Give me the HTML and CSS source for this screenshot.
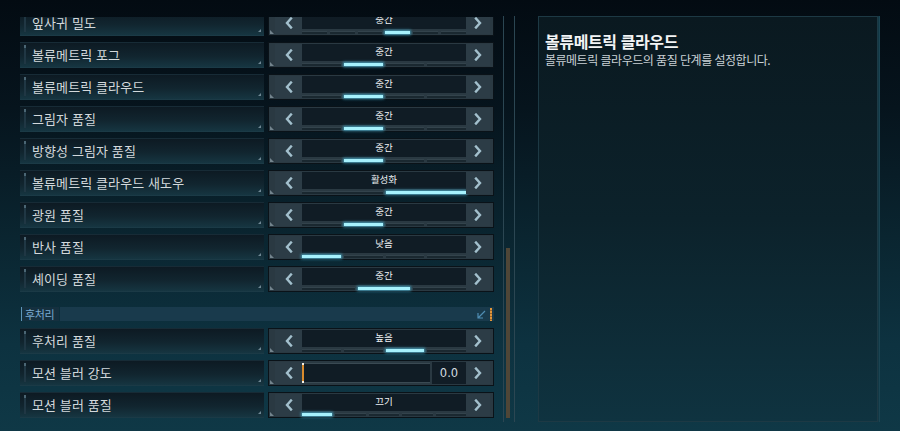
FILE: index.html
```html
<!DOCTYPE html>
<html lang="ko">
<head>
<meta charset="utf-8">
<link rel="stylesheet" href="styles.css">
</head>
<body>
<div class="screen">
  <div class="list-wrap">
    <div class="list">
      <div class="row">
        <div class="label">잎사귀 밀도</div>
        <div class="control">
          <div class="arrow"><svg viewBox="0 0 8 12" width="8" height="12"><polyline points="6,1.5 2,6 6,10.5"/></svg></div>
          <div class="center">
            <div class="display">중간</div>
            <div class="segs"><i></i><i></i><i></i><i class="on"></i><i></i><i></i></div>
          </div>
          <div class="arrow right"><svg viewBox="0 0 8 12" width="8" height="12"><polyline points="2,1.5 6,6 2,10.5"/></svg></div>
        </div>
      </div>
      <div class="row">
        <div class="label">볼류메트릭 포그</div>
        <div class="control">
          <div class="arrow"><svg viewBox="0 0 8 12" width="8" height="12"><polyline points="6,1.5 2,6 6,10.5"/></svg></div>
          <div class="center">
            <div class="display">중간</div>
            <div class="segs"><i></i><i class="on"></i><i></i><i></i></div>
          </div>
          <div class="arrow right"><svg viewBox="0 0 8 12" width="8" height="12"><polyline points="2,1.5 6,6 2,10.5"/></svg></div>
        </div>
      </div>
      <div class="row">
        <div class="label">볼류메트릭 클라우드</div>
        <div class="control">
          <div class="arrow"><svg viewBox="0 0 8 12" width="8" height="12"><polyline points="6,1.5 2,6 6,10.5"/></svg></div>
          <div class="center">
            <div class="display">중간</div>
            <div class="segs"><i></i><i class="on"></i><i></i><i></i></div>
          </div>
          <div class="arrow right"><svg viewBox="0 0 8 12" width="8" height="12"><polyline points="2,1.5 6,6 2,10.5"/></svg></div>
        </div>
      </div>
      <div class="row">
        <div class="label">그림자 품질</div>
        <div class="control">
          <div class="arrow"><svg viewBox="0 0 8 12" width="8" height="12"><polyline points="6,1.5 2,6 6,10.5"/></svg></div>
          <div class="center">
            <div class="display">중간</div>
            <div class="segs"><i></i><i class="on"></i><i></i><i></i></div>
          </div>
          <div class="arrow right"><svg viewBox="0 0 8 12" width="8" height="12"><polyline points="2,1.5 6,6 2,10.5"/></svg></div>
        </div>
      </div>
      <div class="row">
        <div class="label">방향성 그림자 품질</div>
        <div class="control">
          <div class="arrow"><svg viewBox="0 0 8 12" width="8" height="12"><polyline points="6,1.5 2,6 6,10.5"/></svg></div>
          <div class="center">
            <div class="display">중간</div>
            <div class="segs"><i></i><i class="on"></i><i></i><i></i></div>
          </div>
          <div class="arrow right"><svg viewBox="0 0 8 12" width="8" height="12"><polyline points="2,1.5 6,6 2,10.5"/></svg></div>
        </div>
      </div>
      <div class="row">
        <div class="label">볼류메트릭 클라우드 새도우</div>
        <div class="control">
          <div class="arrow"><svg viewBox="0 0 8 12" width="8" height="12"><polyline points="6,1.5 2,6 6,10.5"/></svg></div>
          <div class="center">
            <div class="display">활성화</div>
            <div class="segs"><i></i><i class="on"></i></div>
          </div>
          <div class="arrow right"><svg viewBox="0 0 8 12" width="8" height="12"><polyline points="2,1.5 6,6 2,10.5"/></svg></div>
        </div>
      </div>
      <div class="row">
        <div class="label">광원 품질</div>
        <div class="control">
          <div class="arrow"><svg viewBox="0 0 8 12" width="8" height="12"><polyline points="6,1.5 2,6 6,10.5"/></svg></div>
          <div class="center">
            <div class="display">중간</div>
            <div class="segs"><i></i><i class="on"></i><i></i><i></i></div>
          </div>
          <div class="arrow right"><svg viewBox="0 0 8 12" width="8" height="12"><polyline points="2,1.5 6,6 2,10.5"/></svg></div>
        </div>
      </div>
      <div class="row">
        <div class="label">반사 품질</div>
        <div class="control">
          <div class="arrow"><svg viewBox="0 0 8 12" width="8" height="12"><polyline points="6,1.5 2,6 6,10.5"/></svg></div>
          <div class="center">
            <div class="display">낮음</div>
            <div class="segs"><i class="on"></i><i></i><i></i><i></i></div>
          </div>
          <div class="arrow right"><svg viewBox="0 0 8 12" width="8" height="12"><polyline points="2,1.5 6,6 2,10.5"/></svg></div>
        </div>
      </div>
      <div class="row">
        <div class="label">셰이딩 품질</div>
        <div class="control">
          <div class="arrow"><svg viewBox="0 0 8 12" width="8" height="12"><polyline points="6,1.5 2,6 6,10.5"/></svg></div>
          <div class="center">
            <div class="display">중간</div>
            <div class="segs"><i></i><i class="on"></i><i></i></div>
          </div>
          <div class="arrow right"><svg viewBox="0 0 8 12" width="8" height="12"><polyline points="2,1.5 6,6 2,10.5"/></svg></div>
        </div>
      </div>

      <div class="section">
        <div class="section-title">후처리</div>
        <div class="section-bar">
          <svg class="collapse" viewBox="0 0 9 9" width="9" height="9"><path d="M8 1 L1.5 7.5 M1 3 V8 H6"/></svg>
          <span class="section-mark"></span>
        </div>
      </div>

      <div class="row">
        <div class="label">후처리 품질</div>
        <div class="control">
          <div class="arrow"><svg viewBox="0 0 8 12" width="8" height="12"><polyline points="6,1.5 2,6 6,10.5"/></svg></div>
          <div class="center">
            <div class="display">높음</div>
            <div class="segs"><i></i><i></i><i class="on"></i><i></i></div>
          </div>
          <div class="arrow right"><svg viewBox="0 0 8 12" width="8" height="12"><polyline points="2,1.5 6,6 2,10.5"/></svg></div>
        </div>
      </div>
      <div class="row">
        <div class="label">모션 블러 강도</div>
        <div class="control">
          <div class="arrow"><svg viewBox="0 0 8 12" width="8" height="12"><polyline points="6,1.5 2,6 6,10.5"/></svg></div>
          <div class="slider">
            <div class="track"><span class="handle"></span></div>
            <div class="value">0.0</div>
          </div>
          <div class="arrow right"><svg viewBox="0 0 8 12" width="8" height="12"><polyline points="2,1.5 6,6 2,10.5"/></svg></div>
        </div>
      </div>
      <div class="row">
        <div class="label">모션 블러 품질</div>
        <div class="control">
          <div class="arrow"><svg viewBox="0 0 8 12" width="8" height="12"><polyline points="6,1.5 2,6 6,10.5"/></svg></div>
          <div class="center">
            <div class="display">끄기</div>
            <div class="segs"><i class="on"></i><i></i><i></i><i></i><i></i></div>
          </div>
          <div class="arrow right"><svg viewBox="0 0 8 12" width="8" height="12"><polyline points="2,1.5 6,6 2,10.5"/></svg></div>
        </div>
      </div>
    </div>
  </div>

  <div class="scrollbar"><div class="thumb"></div></div>

  <div class="info">
    <div class="info-title">볼류메트릭 클라우드</div>
    <div class="info-desc">볼류메트릭 클라우드의 품질 단계를 설정합니다.</div>
  </div>
</div>
</body>
</html>
```

FILE: styles.css
```css
html, body {
  margin: 0;
  padding: 0;
}

body {
  width: 900px;
  height: 431px;
  overflow: hidden;
  font-family: "Noto Sans CJK KR", "Noto Sans", sans-serif;
  background: linear-gradient(180deg, #030b12 0%, #06141d 25%, #0a2530 55%, #0d3240 80%, #0f3846 100%);
}

.screen {
  display: flex;
  align-items: flex-start;
  height: 431px;
}

/* ---------- list ---------- */
.list-wrap {
  margin-left: 20px;
  margin-top: 17px;
  width: 474px;
  height: 414px;
  overflow: hidden;
}

.list {
  margin-top: -7px;
  display: flex;
  flex-direction: column;
}

.row {
  display: flex;
  gap: 4px;
  height: 26px;
  margin-bottom: 6px;
}

.label {
  position: relative;
  width: 244px;
  box-sizing: border-box;
  padding-left: 12px;
  font-size: 13px;
  line-height: 24px;
  color: #d3d9dc;
  letter-spacing: 0.1px;
  background: linear-gradient(180deg, #0d1a23 0%, #11252f 55%, #163541 100%);
  border-top: 1px solid #172b36;
  border-bottom: 1px solid #1b3a46;
}

.label::before {
  content: "";
  position: absolute;
  left: 4px;
  top: 2px;
  bottom: 3px;
  width: 2px;
  background: linear-gradient(180deg, #4b6674 0 3px, #203744 3px 100%);
}

.label::after {
  content: "";
  position: absolute;
  right: 3px;
  bottom: 3px;
  width: 0;
  height: 0;
  border-left: 3px solid transparent;
  border-bottom: 3px solid #6f8794;
}

.control {
  position: relative;
  width: 226px;
  box-sizing: border-box;
  display: flex;
  padding: 1px 3px 1px 6px;
  background: #2a3942;
  border: 1px solid #0a1218;
}

.control::after {
  content: "";
  position: absolute;
  left: 1px;
  bottom: 1px;
  width: 0;
  height: 0;
  border-right: 4px solid transparent;
  border-bottom: 4px solid #73848d;
}

.arrow {
  width: 27px;
  display: flex;
  align-items: center;
  justify-content: center;
  background: #2c3c46;
}

.arrow.right {
  width: 24px;
}

.arrow svg polyline {
  fill: none;
  stroke: #a3c0cd;
  stroke-width: 2.4;
  stroke-linecap: square;
  stroke-linejoin: miter;
}

.center {
  width: 164px;
  display: flex;
  flex-direction: column;
}

.display {
  height: 17px;
  background: #101c25;
  color: #eef2f4;
  font-size: 9.5px;
  line-height: 15px;
  text-align: center;
}

.segs {
  margin-top: 2px;
  height: 3px;
  display: flex;
  gap: 3px;
}

.segs i {
  flex: 1;
  background: #1a2830;
  border-top: 1px solid #33434c;
  box-sizing: border-box;
}

.segs i.on {
  background: #a6f1fd;
  border-top: 0;
  box-shadow: 0 0 3px 1px rgba(80, 200, 235, 0.7);
}

/* slider */
.slider {
  width: 164px;
  display: flex;
  gap: 2px;
}

.track {
  position: relative;
  width: 128px;
  background: #101c25;
  border-top: 1px solid #3a4a53;
  border-bottom: 1px solid #3a4a53;
  margin: 1px 0;
}

.handle {
  position: absolute;
  left: 0;
  top: -1px;
  bottom: -1px;
  width: 2px;
  background: #d98a2c;
}

.handle::before,
.handle::after {
  content: "";
  position: absolute;
  left: 0;
  width: 2px;
  height: 2px;
  background: #f3efe6;
}

.handle::before { top: 0; }
.handle::after { bottom: 0; }

.value {
  width: 34px;
  background: #111d26;
  color: #d5dde1;
  font-family: "DejaVu Sans", "Liberation Sans", sans-serif;
  font-size: 11.5px;
  line-height: 22px;
  text-align: center;
}

/* section header */
.section {
  display: flex;
  height: 14px;
  margin-top: 9px;
  margin-bottom: 7px;
}

.section-title {
  width: 38px;
  box-sizing: border-box;
  padding-left: 3px;
  border-left: 1px solid #5d95b8;
  margin-left: 1px;
  background: #15303f;
  color: #7aaad0;
  font-size: 11px;
  line-height: 14px;
  letter-spacing: -0.4px;
}

.section-bar {
  flex: 1;
  margin-left: 1px;
  background: #193a4c;
  display: flex;
  align-items: center;
  justify-content: flex-end;
  gap: 4px;
}

.collapse path {
  fill: none;
  stroke: #4f8db3;
  stroke-width: 1.2;
}

.section-mark {
  width: 2px;
  height: 13px;
  margin-right: 2px;
  background: repeating-linear-gradient(180deg, #e0963a 0 2px, #9c6428 2px 3px);
}

/* scrollbar */
.scrollbar {
  position: relative;
  margin-left: 9px;
  margin-top: 16px;
  width: 10px;
  height: 406px;
  border-left: 1px solid #2b4652;
  border-right: 1px solid #2b4652;
  box-sizing: content-box;
}

.thumb {
  position: absolute;
  left: 2px;
  width: 4px;
  top: 232px;
  height: 170px;
  background: #4f4637;
}

/* info panel */
.info {
  margin-left: 23px;
  margin-top: 16px;
  width: 340px;
  height: 406px;
  box-sizing: border-box;
  padding: 13px 6px;
  border: 1px solid #1d3944;
  box-shadow: 1px 0 0 #123845, 2px 0 0 #1b4452;
  background: linear-gradient(180deg, #0a1920 0%, #0c222b 50%, #0f3340 100%);
}

.info-title {
  font-size: 16px;
  font-weight: 700;
  color: #f2f4f5;
  letter-spacing: -0.4px;
  line-height: 22px;
}

.info-desc {
  margin-top: 0;
  font-size: 12px;
  color: #c9d1d5;
  letter-spacing: -0.5px;
  line-height: 15px;
}
```
